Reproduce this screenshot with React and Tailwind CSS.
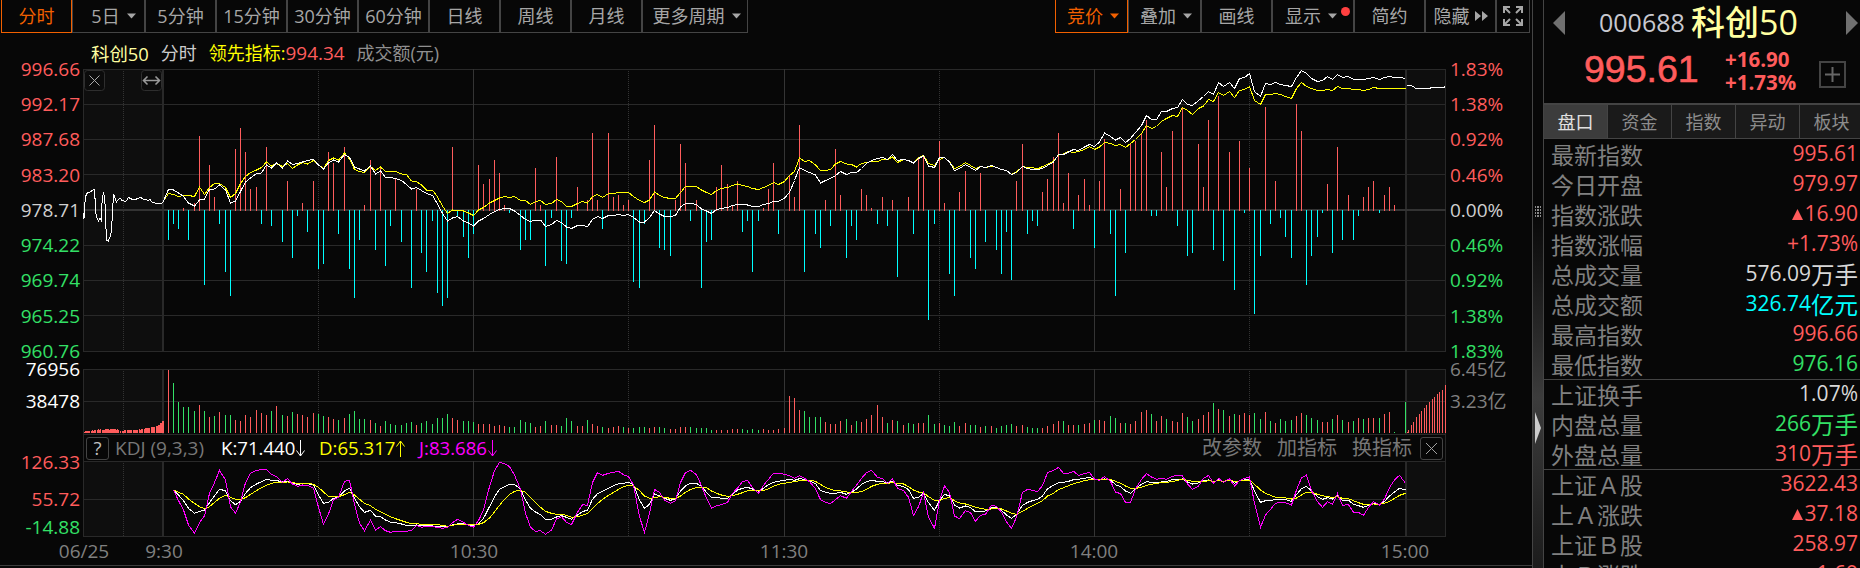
// src/App.jsx
import * as React from "react";
import clsx from "clsx";

const RED = "#ff5c5c";
const GREEN = "#33e066";
const CYAN = "#00ffff";

/** 顶部工具栏 */
const PERIODS = [
  { name: "分时", w: "w-[71px]", active: true },
  { name: "5日", w: "w-[73px] pl-[7px]", menu: true },
  { name: "5分钟", w: "w-[71px]" },
  { name: "15分钟", w: "w-[71px]" },
  { name: "30分钟", w: "w-[71px]" },
  { name: "60分钟", w: "w-[71px]" },
  { name: "日线", w: "w-[71px]" },
  { name: "周线", w: "w-[71px]" },
  { name: "月线", w: "w-[71px]" },
  { name: "更多周期", w: "w-[106px]", menu: true },
];
const TOOLS = [
  { name: "竞价", w: "w-[73px]", active: true, menu: true },
  { name: "叠加", w: "w-[73px]", menu: true },
  { name: "画线", w: "w-[71px]" },
  { name: "显示", w: "w-[82px] pr-[7px]", menu: true, dot: true },
  { name: "简约", w: "w-[71px]" },
  { name: "隐藏", w: "w-[71px]", forward: true },
];

const PRICE_LABELS = ["996.66", "992.17", "987.68", "983.20", "978.71", "974.22", "969.74", "965.25", "960.76"];
const PCT_LABELS = ["1.83%", "1.38%", "0.92%", "0.46%", "0.00%", "0.46%", "0.92%", "1.38%", "1.83%"];

/** 右侧盘口 */
const QUOTES = [
  { label: "最新指数", num: "995.61", tone: "red" },
  { label: "今日开盘", num: "979.97", tone: "red" },
  { label: "指数涨跌", num: "16.90", tone: "red", up: true },
  { label: "指数涨幅", num: "+1.73%", tone: "red" },
  { label: "总成交量", num: "576.09", unit: "万手", tone: "plain" },
  { label: "总成交额", num: "326.74", unit: "亿元", tone: "cyan" },
  { label: "最高指数", num: "996.66", tone: "red" },
  { label: "最低指数", num: "976.16", tone: "green", line: true },
  { label: "上证换手", num: "1.07%", tone: "plain" },
  { label: "内盘总量", num: "266", unit: "万手", tone: "green" },
  { label: "外盘总量", num: "310", unit: "万手", tone: "red", line: true },
  { label: "上证Ａ股", num: "3622.43", tone: "red" },
  { label: "上Ａ涨跌", num: "37.18", tone: "red", up: true },
  { label: "上证Ｂ股", num: "258.97", tone: "red" },
  { label: "上Ｂ涨跌", num: "1.69", tone: "red" },
];
const TONES = {
  red: "text-[#ff5c5c]",
  green: "text-[#33e066]",
  cyan: "text-[#00ffff]",
  plain: "text-[#d8d8d8]",
};

/** 每分钟买卖力道：正为红柱，负为蓝柱 */
const FORCE = [
  -30, -14, -19, 2, -30, 7, 74, -75, 45, 13,
  -14, -62, -86, 61, 82, 58, 21, 23, -14, 63,
  -16, 0, -32, 29, -48, -6, 7, -22, 29, -59,
  -54, 58, 47, -24, 63, -59, -88, -30, 5, 50,
  -40, 42, -56, -16, 31, -32, 0, -78, 21, -43,
  -62, -11, -83, -96, -88, 63, -6, -27, -48, -24,
  45, 26, 31, 50, 37, 5, -3, 0, -40, -30,
  -30, 42, 5, -56, -8, 53, -51, -54, -8, 23,
  0, 10, 77, 10, -19, 77, 13, 15, 5, 10,
  -72, -78, -14, 50, 85, -38, -40, -46, 10, 66,
  47, -11, 10, -78, -32, -30, 23, 45, 26, 5,
  29, -22, -11, -62, -11, 2, 21, 47, -24, 0,
  35, 13, 85, -62, 0, -24, -38, 10, -16, 61,
  15, -48, -16, -30, 21, 15, 2, -14, 13, -16,
  10, -67, 0, 13, -24, 53, 53, -110, -14, 69,
  7, -64, -86, 18, 39, -48, -59, 37, -32, 0,
  -40, -64, -22, -70, 29, 66, -24, -11, -16, 18,
  31, 53, 77, 7, 37, -19, 15, 31, 5, -38,
  29, 71, -24, -86, 21, -43, 66, 69, 77, 90,
  -6, -6, 58, 23, 79, -16, 103, -46, -43, 66,
  23, 90, -40, 114, -51, 58, -80, 69, -3, 42,
  -104, -46, 103, -14, 29, -8, -27, -48, 106, 79,
  -75, -46, -27, -3, 26, -43, 63, -30, 15, -30,
  -6, 13, 23, 29, -3, 15, 23, 5, 0, 0,
];

/** 成交量：正为红柱，负为绿柱 */
const VOLUME = [
  63, -50, -31, -26, -26, -22, 28, -22, 16, -17,
  21, -18, -18, 13, 12, 18, 16, 23, 20, 18,
  -22, 27, -18, 17, -21, 19, 18, 16, 20, -19,
  -17, 16, 14, -13, 15, -19, -22, -14, -14, 13,
  -10, 7, -12, -9, -8, -8, -10, -11, 8, -10,
  -12, -9, -15, -15, -19, 15, 13, -12, -12, -11,
  9, 9, 9, 7, 8, 7, -6, -6, -13, -11,
  -10, 6, 7, -12, 8, 8, -7, -15, -12, 7,
  7, -13, 9, 7, -6, 5, 6, 7, -6, 5,
  -5, -6, -6, 5, 6, -6, -5, 4, 4, 6,
  6, -6, -5, -5, -5, -3, 3, 3, 3, 4,
  4, -4, -3, -4, -3, 4, 3, 3, 4, 5,
  37, 35, 23, -22, -16, -16, -16, 11, 9, 9,
  12, -14, 8, -12, 11, 14, 18, 28, 16, -10,
  13, -12, 8, -10, -9, 10, 10, -18, -9, 10,
  -8, -7, -11, 7, 10, -8, -8, 6, -7, 7,
  -5, -7, -8, -9, 7, 8, -6, -5, -5, 5,
  7, 9, 12, -12, 8, 8, -8, 9, 10, -13,
  13, 12, -17, -15, 10, -10, 9, 12, 21, 23,
  -19, 12, 17, -14, 12, 11, 20, -16, -12, 14,
  18, 21, -30, 24, -23, 17, -19, 18, 20, 18,
  -20, -14, 21, -12, 10, -14, -12, -13, 17, 20,
  -18, -15, -13, 11, 11, -14, 18, -13, 11, -12,
  15, -14, 15, 15, -15, 19, 21, -1, 0, -31,
];

/** 集合竞价阶段的量柱 */
const OPEN_AUCTION = [
  1, 2, 2, 2, 2, 2, 0, 2, 3, 2, 3, 3, 0, 3, 4, 3, 4, 0, 3, 3,
  3, 4, 4, 4, 4, 3, 4, 4, 4, 4, 4, 4, 3, 4, 3, 0, 2, 0, 2, 2,
  3, 3, 0, 3, 3, 3, 3, 3, 0, 3, 3, 3, 3, 3, 0, 4, 3, 4, 4, 0,
  4, 5, 5, 5, 5, 5, 0, 6, 6, 6, 6, 0, 7, 7, 8, 8, 10, 10, 12, 12,
];
const CLOSE_AUCTION = [
  [1407, 1], [1408, 3], [1411, 8], [1413, 11], [1416, 16], [1419, 19], [1421, 22], [1424, 25],
  [1426, 28], [1429, 31], [1432, 34], [1434, 36], [1437, 39], [1439, 41], [1442, 43], [1445, 48],
];

/** 指数走势（白线），从 9:30 起 */
const INDEX_LINE = [
  201,
  189.5, 190, 193, 196.5, 203, 206, 200, 199, 189.5, 189,
  185, 190, 203, 201, 191.5, 182, 178, 173.5, 173, 165,
  168, 163, 168, 161, 164.5, 163.5, 162, 160.5, 159.5, 165,
  169, 163, 160, 162, 154.5, 157.5, 167, 169, 171, 166,
  174, 171, 177.5, 177.5, 178.5, 180.5, 184.5, 189, 187.5, 190.5,
  193.5, 195.5, 204, 213.5, 221, 218, 216.5, 221, 223, 226,
  221, 218.5, 214.5, 211.5, 209.5, 208.5, 208.5, 211, 215.5, 219.5,
  221.5, 220, 220, 226.5, 224.5, 220.5, 222.5, 227, 228.5, 225.5,
  225.5, 226.5, 219.5, 216.5, 218.5, 215.5, 215.5, 214.5, 215.5, 214.5,
  217.5, 222, 222, 217.5, 210.5, 214, 216.5, 216.5, 215.5, 207,
  203.5, 203.5, 204.5, 209, 211, 213.5, 209.5, 208.5, 207.5, 205.5,
  204.5, 204.5, 205, 206.5, 206.5, 204.5, 203.5, 201.5, 201.5, 198,
  192.5, 180.5, 167.5, 170.5, 172.5, 175, 183, 180.5, 178.5, 175.5,
  171.5, 174.5, 172.5, 172.5, 168.5, 163.5, 160.5, 158.5, 157.5, 159.5,
  154.5, 160.5, 159.5, 160.5, 163, 158.5, 156, 166, 167.5, 157.5,
  157.5, 162, 170.5, 168.5, 164.5, 167.5, 170.5, 166.5, 167.5, 165.5,
  167.5, 169.5, 170.5, 174.5, 172.5, 166.5, 168.5, 169.5, 169.5, 168.5,
  165.5, 162, 154.5, 154.5, 152, 149.5, 150.5, 147, 144.5, 146.5,
  142, 133, 136.5, 140, 137.5, 142.5, 138.5, 132.5, 125.5, 115.5,
  119.5, 119.5, 111.5, 111.5, 108.5, 107.5, 99.5, 104.5, 105.5, 100.5,
  96.5, 91.5, 94.5, 82.5, 86.5, 82.5, 88.5, 78.5, 77.5, 73.5,
  91.5, 96.5, 83.5, 84.5, 82.5, 84.5, 85.5, 86.5, 77.5, 70.5,
  73.5, 78.5, 81.5, 80.5, 76.5, 79.5, 74.5, 77.5, 76.5, 79.5,
  79.5, 79.5, 78.5, 77.5, 79.5, 77.5, 76.5, 77.5, 77.5, 78.5,
];

/** 领先指标（黄线） */
const LEAD_LINE = [
  201,
  193.5, 194.5, 196.5, 195.5, 195.5, 196.5, 187, 194.5, 187.5, 183.5,
  183.5, 187.5, 197.5, 193.5, 183.5, 176.5, 172.5, 170, 167.5, 162,
  166, 163.5, 166.5, 163.5, 168.5, 165, 162.5, 164, 160.5, 165,
  168.5, 160.5, 158, 160, 153, 159, 169.5, 171.5, 172.5, 166.5,
  170.5, 167, 171.5, 171.5, 171.5, 174, 174.5, 181, 181.5, 185,
  190, 190, 197, 206, 213.5, 210, 210.5, 211, 213, 215.5,
  210, 207.5, 203, 200.5, 198, 196.5, 197.5, 196.5, 200.5, 200.5,
  204.5, 201.5, 200.5, 204.5, 203.5, 199.5, 201.5, 206.5, 206.5, 203.5,
  201.5, 203, 196.5, 194.5, 197.5, 193.5, 193.5, 192.5, 192.5, 192.5,
  196.5, 200.5, 202.5, 200, 192, 195.5, 197.5, 198.5, 198.5, 192.5,
  186.5, 186.5, 186.5, 190, 192.5, 194.5, 190.5, 188.5, 187.5, 185.5,
  184, 185.5, 186.5, 188.5, 189.5, 187.5, 185.5, 182.5, 184.5, 181.5,
  175.5, 171.5, 158, 161.5, 160.5, 165, 170.5, 170.5, 169.5, 164,
  161.5, 164, 164.5, 167, 163.5, 162.5, 161.5, 161.5, 159.5, 159.5,
  157, 162.5, 159.5, 160.5, 163, 157.5, 155.5, 163.5, 165.5, 159.5,
  157.5, 162, 168.5, 166.5, 162.5, 165.5, 168.5, 166.5, 167.5, 166,
  167.5, 169.5, 170.5, 174.5, 172, 166.5, 167.5, 167.5, 169, 166.5,
  164.5, 161, 155, 154, 151.5, 152.5, 151.5, 149.5, 146.5, 149.5,
  147, 142.5, 143.5, 145.5, 144.5, 147.5, 143.5, 139.5, 133.5, 125.5,
  128.5, 126.5, 121.5, 118.5, 115.5, 116.5, 107.5, 110.5, 114.5, 108.5,
  106, 99.5, 101.5, 92.5, 95.5, 91.5, 97.5, 90.5, 89.5, 86.5,
  100.5, 104.5, 94.5, 94.5, 93.5, 94.5, 96.5, 98.5, 88.5, 82.5,
  86.5, 88.5, 90.5, 90.5, 89.5, 90.5, 86.5, 88.5, 88.5, 89.5,
  89.5, 90.5, 89.5, 87.5, 88.5, 88.5, 88.5, 88.5, 88.5, 88.5,
];

const thirds = (base, values) => values.map((v) => base + v / 3);

/** KDJ，从第 2 分钟起 */
const K_LINE = [
  ...thirds(280, [
    630, 645, 662, 685, 700, 694, 690, 668, 648,
    628, 632, 662, 674, 664, 640, 623, 612, 605, 598,
    601, 602, 605, 604, 610, 613, 611, 611, 615, 645,
    670, 667, 655, 651, 633, 625, 655, 680, 697, 691,
    708, 710, 720, 727, 728, 732, 736, 737, 735, 737,
    737, 738, 738, 739, 739, 735, 732, 731, 735, 737,
    731, 715, 680, 650, 628, 620, 613, 613, 628, 660,
    685, 696, 704, 718, 718, 711, 707, 712, 718, 705,
    695, 690, 658, 641, 634, 625, 617, 611, 610, 607,
    614, 660, 685, 673, 642, 648, 655, 661, 656, 633,
    618, 610, 610, 619, 637, 652, 652, 655, 655, 643,
    630, 625, 622, 627, 634, 625, 614, 607, 604, 601,
    598, 601, 596, 598, 603, 611, 631, 637, 640, 640,
    637, 643, 637, 627, 613, 605, 601, 604, 605, 609,
    604, 616, 620, 629, 655, 652, 640, 668, 691, 662,
  ]),
  ...thirds(340, [
    463, 468, 495, 504, 498, 502, 516, 514, 513, 502,
    504, 511, 525, 535, 524, 496, 487, 482, 478, 468,
    446, 436, 428, 427, 424, 419, 418, 415, 412, 418,
    419, 417, 420, 434, 440, 453, 460, 447, 433, 425,
    427, 427, 426, 424, 419, 418, 417, 426, 432, 429,
    421, 420, 426, 419, 425, 420, 430, 422, 420, 417,
    453, 487, 482, 481, 479, 479, 479, 484, 464, 446,
    439, 453, 470, 478, 473, 477, 467, 481, 481, 493,
    497, 502, 496, 490, 494, 484, 468, 456, 445, 450,
  ]),
];
const D_LINE = [
  ...thirds(280, [
    630, 637, 643, 657, 670, 680, 686, 680, 667,
    655, 646, 652, 658, 658, 653, 643, 632, 623, 616,
    610, 607, 607, 606, 608, 610, 610, 610, 613, 622,
    636, 649, 650, 650, 644, 637, 645, 658, 670, 677,
    688, 695, 703, 710, 716, 722, 727, 731, 731, 733,
    733, 734, 734, 736, 739, 736, 733, 733, 733, 734,
    733, 728, 714, 696, 676, 658, 643, 634, 631, 637,
    653, 668, 682, 694, 700, 703, 703, 706, 712, 710,
    706, 700, 686, 671, 658, 646, 637, 628, 620, 616,
    617, 632, 648, 655, 653, 650, 652, 655, 656, 648,
    637, 628, 623, 622, 623, 633, 640, 645, 649, 647,
    643, 638, 632, 631, 633, 632, 626, 619, 613, 610,
    607, 605, 602, 601, 601, 604, 613, 622, 628, 632,
    633, 636, 638, 637, 635, 628, 619, 613, 610, 610,
    608, 610, 612, 620, 630, 636, 638, 650, 661, 662,
  ]),
  ...thirds(340, [
    475, 473, 482, 489, 492, 496, 502, 505, 508, 507,
    505, 507, 513, 520, 523, 514, 505, 497, 490, 482,
    468, 460, 449, 443, 437, 431, 427, 422, 419, 418,
    419, 418, 418, 424, 430, 438, 445, 445, 442, 436,
    433, 430, 428, 427, 425, 421, 418, 421, 424, 426,
    425, 422, 424, 422, 424, 420, 424, 423, 421, 420,
    433, 450, 460, 466, 472, 472, 474, 477, 474, 465,
    457, 457, 463, 467, 470, 472, 470, 475, 476, 482,
    488, 493, 493, 492, 493, 490, 484, 475, 466, 460,
  ]),
];
const J_LINE = [
  ...thirds(280, [
    630, 662, 690, 735, 760, 728, 708, 640, 608,
    571, 600, 680, 700, 665, 608, 580, 571, 569, 569,
    583, 590, 607, 596, 612, 619, 615, 616, 625, 682,
    733, 702, 660, 652, 604, 601, 672, 730, 752, 721,
    751, 740, 752, 757, 754, 754, 754, 751, 736, 742,
    739, 740, 742, 745, 742, 728, 718, 727, 736, 742,
    722, 690, 620, 572, 547, 551, 560, 585, 628, 700,
    742, 754, 752, 763, 750, 717, 710, 727, 734, 697,
    674, 676, 608, 578, 586, 580, 577, 574, 584, 590,
    615, 710, 757, 700, 628, 637, 660, 670, 662, 608,
    578, 571, 584, 617, 655, 685, 677, 674, 667, 640,
    624, 605, 601, 623, 640, 616, 598, 580, 580, 583,
    587, 595, 587, 595, 605, 626, 659, 667, 671, 659,
    647, 655, 634, 616, 595, 578, 571, 592, 596, 610,
    596, 625, 632, 652, 706, 680, 638, 712, 745, 662,
  ]),
  ...thirds(340, [
    438, 457, 528, 536, 512, 518, 544, 526, 523, 496,
    499, 517, 546, 565, 532, 457, 448, 451, 455, 437,
    398, 391, 382, 400, 400, 394, 406, 401, 397, 418,
    421, 410, 424, 456, 461, 487, 487, 447, 418, 401,
    411, 418, 415, 418, 409, 406, 408, 432, 448, 438,
    415, 406, 430, 415, 427, 416, 438, 422, 415, 411,
    490, 562, 525, 508, 490, 487, 488, 495, 450, 414,
    405, 452, 485, 502, 485, 492, 461, 496, 494, 517,
    517, 526, 502, 485, 495, 477, 443, 420, 406, 430,
  ]),
];

const OPEN_LINE =
  "83.3,213 84,218.5 85.3,197 87.3,193 91.3,191.3 93.3,189.5 94.7,189.5 95.3,207 96.3,216.5 98.6,221 100,218.5 101.3,220.5 102,203 103.3,192.5 104.7,197 105.6,217 106.4,240 108.3,241.3 110.6,235 111.6,230 112.7,207 113.7,194.5 114.7,197 116.3,202 118.3,199.5 120,197.8 121.5,200 125,201.4 126.7,200.6 128.3,197.5 131.6,199 136.6,199 140.6,197.5 143.3,199 146,199 147.3,200.6 150,199.6 152,202.3 156.6,203.4 162,203.4 163.5,201";
const CLOSE_LINE = "1407,85.5 1411.5,85.5 1416,88.5 1428.5,88.5 1432.5,87.5 1443.5,87.5 1445.5,86.5";

/** 分钟序号 -> 横坐标 */
const minuteX = (i) => Math.floor(163 + i * 5.175);
const toPoints = (values, start = 0) => values.map((y, i) => `${minuteX(i + start) + 0.5},${y}`).join(" ");

/** 面板底色与网格，坐标与整页一致 */
function Grid({ top, bottom, rows }) {
  const h = bottom - top + 1;
  return (
    <g>
      <rect x="83" y={top} width="80" height={h} fill="#0e0e0e" />
      <rect x="1406" y={top} width="40" height={h} fill="#0e0e0e" />
      {rows.map((y) => <rect key={y} x="83" y={y} width="1363" height="1" fill="#292929" />)}
      {[123.5, 318.5, 628.5, 939.5, 1249.5].map((x) => (
        <line key={x} x1={x} x2={x} y1={top + 2} y2={bottom} stroke="#333333" strokeDasharray="1 1" />
      ))}
      {[473, 784, 1094].map((x) => <rect key={x} x={x} y={top} width="1" height={h} fill="#343434" />)}
      <rect x="83" y={top} width="1" height={h} fill="#292929" />
      <rect x="1445" y={top} width="1" height={h} fill="#292929" />
      <rect x="162" y={top} width="2" height={h} fill="#292929" />
      <rect x="1405" y={top} width="2" height={h} fill="#292929" />
    </g>
  );
}

function Polyline({ points, color }) {
  return <polyline points={points} fill="none" stroke={color} strokeWidth="1" />;
}

function PricePanel() {
  return (
    <svg width="1363" height="283" viewBox="83 69 1363 283" shapeRendering="crispEdges" className="block shrink-0">
      <Grid top={69} bottom={351} rows={[69, 104, 139, 174, 245, 280, 315, 351]} />
      <rect x="83" y="209" width="1363" height="2" fill="#333333" />
      {FORCE.map((v, i) => v !== 0 && (
        <rect key={i} x={minuteX(i + 1)} y={v > 0 ? 210 - v : 210} width="1" height={v > 0 ? v + 1 : -v} fill={v > 0 ? RED : CYAN} />
      ))}
      <Polyline points={toPoints(LEAD_LINE)} color="#ffff00" />
      <Polyline points={OPEN_LINE} color="#ffffff" />
      <Polyline points={toPoints(INDEX_LINE)} color="#ffffff" />
      <Polyline points={CLOSE_LINE} color="#ffffff" />
      <g shapeRendering="auto" fill="none">
        <rect x="84.5" y="70.5" width="20" height="20" rx="3" stroke="#2e2e2e" fill="#0b0b0b" />
        <path d="M89.5 75.5l10 10M99.5 75.5l-10 10" stroke="#a8a8a8" />
        <rect x="141.5" y="70.5" width="20" height="20" rx="3" stroke="#2e2e2e" fill="#0b0b0b" />
        <path d="M144 80.5h15M147.5 76.5l-4 4 4 4M155.5 76.5l4 4-4 4" stroke="#999999" strokeWidth="1.6" />
      </g>
    </svg>
  );
}

function VolumePanel() {
  return (
    <svg width="1363" height="66" viewBox="83 369 1363 66" shapeRendering="crispEdges" className="block shrink-0">
      <Grid top={369} bottom={434} rows={[369, 401, 434]} />
      {OPEN_AUCTION.map((h, i) => <rect key={i} x={84 + i} y={433 - h} width="1" height={h} fill={RED} />)}
      {VOLUME.map((v, i) => v !== 0 && (
        <rect key={i} x={minuteX(i + 1)} y={433 - Math.abs(v)} width="1" height={Math.abs(v)} fill={v > 0 ? RED : GREEN} />
      ))}
      {CLOSE_AUCTION.map(([x, h]) => <rect key={x} x={x} y={433 - h} width="1" height={h} fill={RED} />)}
    </svg>
  );
}

function KdjPanel() {
  return (
    <svg width="1363" height="76" viewBox="83 461 1363 76" shapeRendering="crispEdges" className="block shrink-0">
      <Grid top={461} bottom={536} rows={[461, 499, 536]} />
      <Polyline points={toPoints(K_LINE, 2)} color="#ffffff" />
      <Polyline points={toPoints(D_LINE, 2)} color="#ffff00" />
      <Polyline points={toPoints(J_LINE, 2)} color="#ff00ff" />
    </svg>
  );
}

function Caret() {
  return (
    <svg width="9" height="6" viewBox="0 0 9 6" className="ml-[7px] -mr-[3px] shrink-0">
      <path d="M0 .5h9L4.5 5.5z" fill="currentColor" />
    </svg>
  );
}

function BarButton({ item }) {
  return (
    <button
      className={clsx(
        "relative flex h-[33px] shrink-0 items-center justify-center border-x border-b text-[18px] whitespace-nowrap",
        item.w,
        item.active ? "border-[#f26000] text-[#f26000]" : "border-[#444444] text-[#a6a6a6]"
      )}
    >
      {item.name}
      {item.menu && <Caret />}
      {item.dot && <i className="absolute top-[7px] right-[3px] h-[9px] w-[9px] rounded-full bg-[#ff4040]" />}
      {item.forward && (
        <svg width="13" height="10" viewBox="0 0 13 10" className="ml-[5px] shrink-0">
          <path d="M0 0l6 5-6 5zM7 0l6 5-6 5z" fill="currentColor" />
        </svg>
      )}
    </button>
  );
}

function Toolbar() {
  return (
    <div className="flex h-[33px] pl-px">
      {PERIODS.map((p) => <BarButton key={p.name} item={p} />)}
      <div className="flex-1" />
      {TOOLS.map((p) => <BarButton key={p.name} item={p} />)}
      <button className="mr-[2px] flex h-[33px] w-[34px] items-center justify-center border-x border-b border-[#444444] text-[#a6a6a6]">
        <svg width="22" height="22" viewBox="0 0 22 22" fill="none" stroke="currentColor" strokeWidth="2">
          <path d="M2 8V2h6M14 2h6v6M20 14v6h-6M8 20H2v-6M2 2l6 6M20 2l-6 6M20 20l-6-6M2 20l6-6" />
        </svg>
      </button>
    </div>
  );
}

/** 纵轴刻度，文字以刻度线为中心 */
function Scale({ labels, align, className }) {
  return (
    <div className={clsx("flex shrink-0 flex-col justify-between text-[19px]", className)}>
      {labels.map(([text, color], i) => (
        <div key={i} className={clsx("flex h-px items-center whitespace-nowrap", align === "right" && "justify-end", color)}>{text}</div>
      ))}
    </div>
  );
}

const tinted = (list, mid) => list.map((t, i) => [t, i < mid ? "text-[#ff5c5c]" : i === mid ? "text-[#d0d0d0]" : "text-[#33e066]"]);

function Trend({ down }) {
  return (
    <svg width="9" height="17" viewBox="0 0 9 17" fill="none" stroke="currentColor" className="ml-[1px]">
      <path d={down ? "M4.5 0v16M.5 10.5l4 5.5 4-5.5" : "M4.5 17V1M.5 6.5l4-5.5 4 5.5"} />
    </svg>
  );
}

function KdjHeader() {
  return (
    <div className="ml-[83px] flex h-[26px] w-[1363px] items-center border-x border-[#292929] pr-[2px] pl-[2px] text-[18.6px] whitespace-nowrap">
      <span className="flex h-[23px] w-[23px] items-center justify-center rounded-[3px] border border-[#444444] text-[#c0c0c0]">?</span>
      <span className="ml-[6px] w-[106px] text-[19px] text-[#777777]">KDJ (9,3,3)</span>
      <span className="flex w-[98px] items-center text-white">K:71.440<Trend down /></span>
      <span className="flex w-[100px] items-center text-[#ffff00]">D:65.317<Trend /></span>
      <span className="flex items-center text-[#ff00ff]">J:83.686<Trend down /></span>
      <div className="ml-auto flex items-center gap-[15px] text-[20px] text-[#777777]">
        <span>改参数</span>
        <span>加指标</span>
        <span>换指标</span>
      </div>
      <span className="ml-[8px] flex h-[23px] w-[23px] items-center justify-center rounded-[3px] border border-[#444444] text-[#a0a0a0]">
        <svg width="11" height="11" viewBox="0 0 11 11" stroke="currentColor"><path d="M0 0l11 11M11 0L0 11" /></svg>
      </span>
    </div>
  );
}

function ChartArea() {
  return (
    <main className="flex h-[566px] w-[1532px] shrink-0 flex-col border-b border-[#3c3c3c]">
      <Toolbar />
      <div className="flex h-9 items-center gap-3 pb-px pt-[6px] pl-[91px] text-[18px] whitespace-nowrap">
        <span className="text-[18.4px] text-[#ffffa0]">科创50</span>
        <span className="text-[#cccccc]">分时</span>
        <span className="flex items-center text-[#ffff00]">领先指标:<b className="text-[18.9px] font-normal text-[#ff5c5c]">994.34</b></span>
        <span className="text-[#909090]">成交额(元)</span>
      </div>

      <div className="flex">
        <Scale labels={tinted(PRICE_LABELS, 4)} align="right" className="-mt-[0.5px] h-[283px] w-[83px] pr-[3px]" />
        <PricePanel />
        <Scale labels={tinted(PCT_LABELS, 4)} className="-mt-[0.5px] h-[283px] pl-[4px]" />
      </div>

      <div className="mt-[17px] flex">
        <Scale labels={[["76956", "text-white"], ["38478", "text-white"]]} align="right" className="h-[33px] w-[83px] pr-[3px]" />
        <VolumePanel />
        <Scale labels={[["6.45亿", "text-[#808080]"], ["3.23亿", "text-[#808080]"]]} className="h-[33px] pl-[4px]" />
      </div>

      <KdjHeader />

      <div className="flex">
        <div className="flex w-[83px] flex-col pr-[3px] text-right text-[19px]">
          <div className="flex h-[2px] items-center justify-end text-[#ff5c5c]">126.33</div>
          <div className="mt-[35px] flex h-[2px] items-center justify-end text-[#ff5c5c]">55.72</div>
          <div className="mt-[26px] flex h-[2px] items-center justify-end text-[#33e066]">-14.88</div>
        </div>
        <KdjPanel />
      </div>

      {/* 时间轴 */}
      <div className="flex h-[28px] items-center pl-[44px] text-[19px] text-[#808080]">
        <span className="w-[80px] text-center">06/25</span>
        <span className="w-[80px] text-center">9:30</span>
        <span className="ml-[230px] w-[80px] text-center">10:30</span>
        <span className="ml-[230px] w-[80px] text-center">11:30</span>
        <span className="ml-[230px] w-[80px] text-center">14:00</span>
        <span className="ml-[231px] w-[80px] text-center">15:00</span>
      </div>
    </main>
  );
}

function Splitter() {
  return (
    <div className="flex h-full w-[12px] shrink-0 flex-col items-center border-x border-[#444444] bg-linear-to-b from-[#070707] from-36% via-[#3c3c3c] via-70% to-[#1c1c1c]">
      <div className="mt-[206px] grid grid-cols-3 gap-px">
        {Array.from({ length: 12 }, (_, i) => <i key={i} className="h-[2px] w-[1.5px] bg-[#8a8a8a]" />)}
      </div>
      <svg width="6" height="32" viewBox="0 0 6 32" className="mt-[195px]">
        <path d="M0 0l6 16-6 16z" fill="#cccccc" />
      </svg>
    </div>
  );
}

function QuotePanel() {
  const tabs = ["盘口", "资金", "指数", "异动", "板块"];
  return (
    <aside className="flex h-full w-[316px] shrink-0 flex-col overflow-hidden">
      <div className="flex h-[46px] shrink-0 items-center pl-[9px]">
        <svg width="12" height="24" viewBox="0 0 12 24" className="shrink-0"><path d="M12 0v24L0 12z" fill="#707070" /></svg>
        <span className="ml-[34px] w-[92px] shrink-0 pb-[2px] text-[25px] leading-[44px] text-[#c8c8d0]">000688</span>
        <span className="w-[155px] shrink-0 pb-px text-[34px] leading-[45px] font-medium text-[#ffffa0]">科创50</span>
        <svg width="12" height="24" viewBox="0 0 12 24" className="shrink-0"><path d="M0 0v24l12-12z" fill="#707070" /></svg>
      </div>
      <div className="flex h-[57px] shrink-0 items-center pl-[40px]">
        <span className="w-[141px] shrink-0 pb-[9px] font-['Liberation_Sans',sans-serif] text-[37.5px] leading-none text-[#ff5c5c] [-webkit-text-stroke:0.6px_#ff5c5c]">995.61</span>
        <div className="w-[94px] shrink-0 pb-[7px] text-[20.5px] leading-[23px] font-bold text-[#ff5c5c]">
          <div>+16.90</div>
          <div>+1.73%</div>
        </div>
        <button className="flex h-[27px] w-[27px] shrink-0 items-center justify-center border-2 border-[#444444] text-[#666666]">
          <svg width="15" height="15" viewBox="0 0 15 15" stroke="currentColor" strokeWidth="2"><path d="M7.5 0v15M0 7.5h15" /></svg>
        </button>
      </div>
      <div className="flex h-[36px] shrink-0 border-t-2 border-b border-[#444444]">
        {tabs.map((t, i) => (
          <div
            key={t}
            className={clsx(
              "flex w-[64px] shrink-0 items-center justify-center border-r border-[#444444] pt-[2px] text-[18px]",
              i === 0 ? "bg-[#3c3c3c] text-[#e0e0e0]" : "bg-[#1a1a1a] text-[#8c8c8c]"
            )}
          >
            {t}
          </div>
        ))}
      </div>
      <div className="pt-px">
        {QUOTES.map((q) => (
          <div key={q.label} className="flex h-[30px] items-center justify-between pr-[2px] pl-[7px] whitespace-nowrap">
            <span className="text-[23px] leading-[30px] text-[#808080]">{q.label}</span>
            <span className={clsx("flex items-center text-[21px] leading-[26px]", TONES[q.tone])}>
              {q.up && <svg width="11" height="11" viewBox="0 0 11 11" className="mr-[1px] mb-px"><path d="M5.5 0L11 11H0z" fill="currentColor" /></svg>}
              <span className="pb-[4px]">{q.num}</span>
              {q.unit && <span className="text-[23.5px]">{q.unit}</span>}
            </span>
            {q.line && <i className="absolute right-0 mt-[29px] h-px w-[316px] bg-[#444444]" />}
          </div>
        ))}
      </div>
    </aside>
  );
}

export default function App() {
  return (
    <div className="relative flex h-[568px] w-[1860px] overflow-hidden bg-[#070707] font-['Open_Sans','Noto_Sans_CJK_SC',sans-serif]">
      <ChartArea />
      <Splitter />
      <QuotePanel />
    </div>
  );
}
